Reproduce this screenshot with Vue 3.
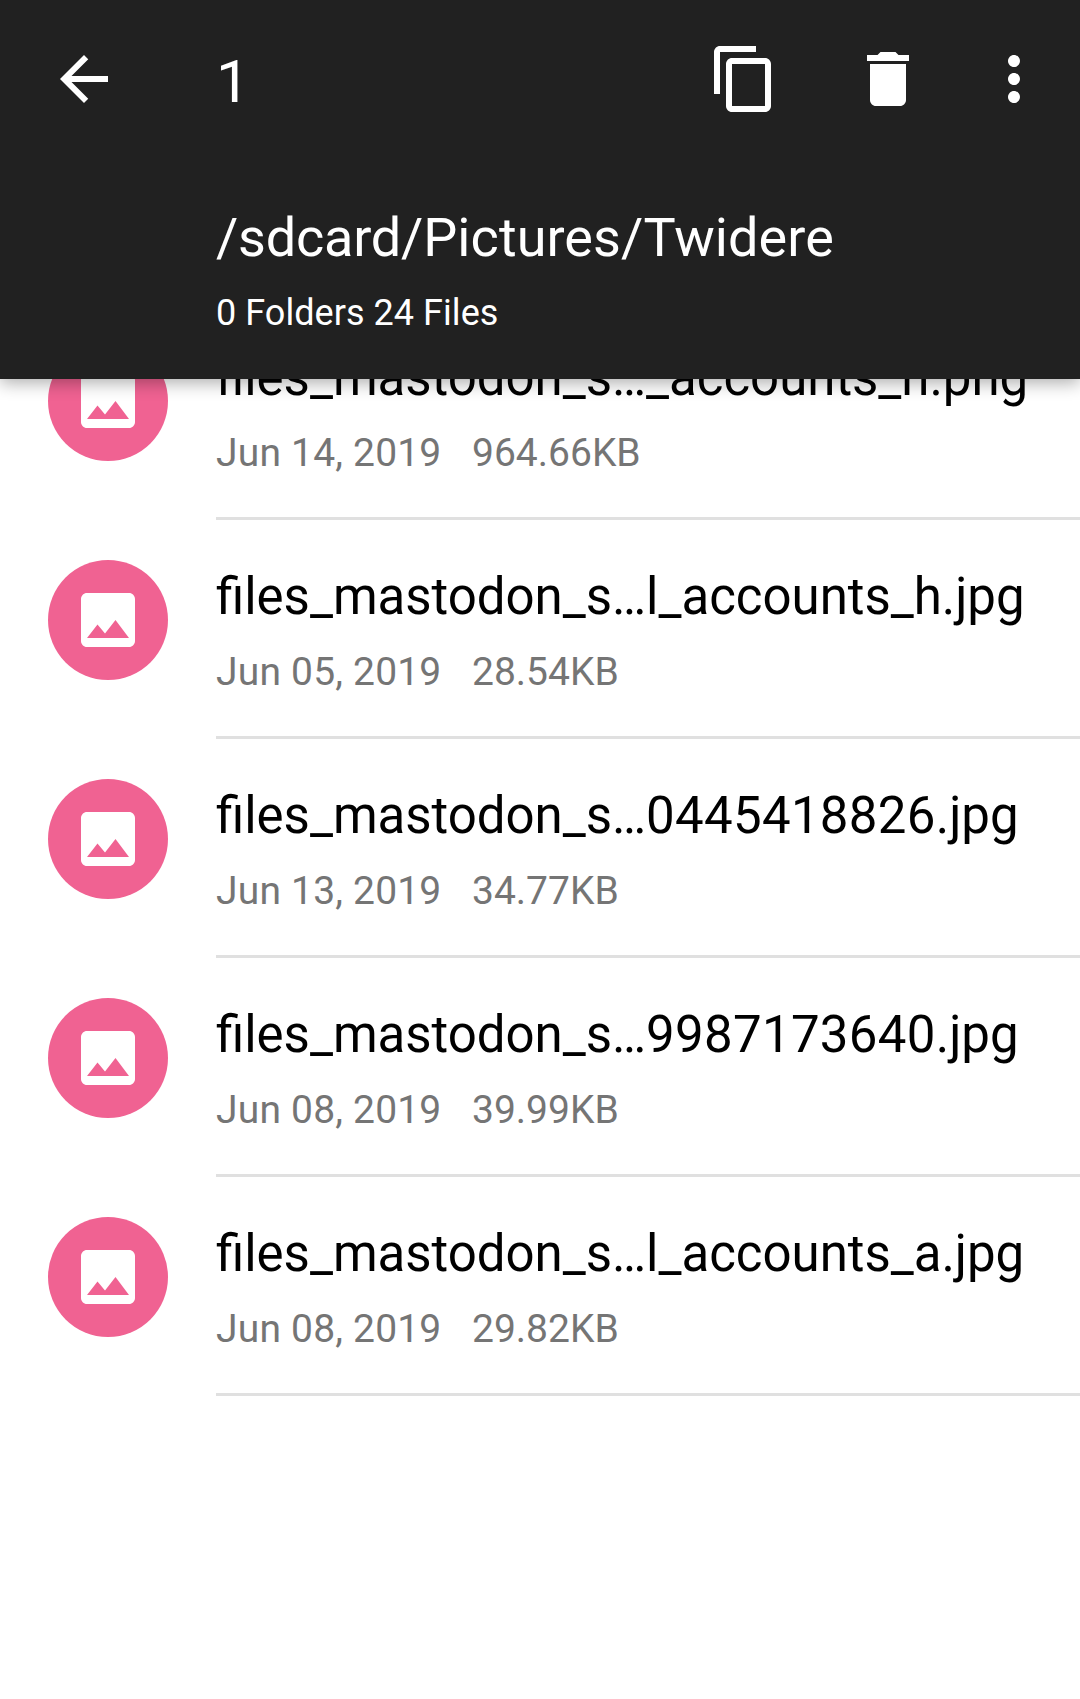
<script setup>
const files = [
  { stem: 'files_mastodon_s…', digits: '', tail: '_accounts_h.png', date: 'Jun 14, 2019', size: '964.66KB' },
  { stem: 'files_mastodon_s…', digits: '', tail: 'l_accounts_h.jpg', date: 'Jun 05, 2019', size: '28.54KB' },
  { stem: 'files_mastodon_s…', digits: '0445418826', tail: '.jpg', date: 'Jun 13, 2019', size: '34.77KB' },
  { stem: 'files_mastodon_s…', digits: '9987173640', tail: '.jpg', date: 'Jun 08, 2019', size: '39.99KB' },
  { stem: 'files_mastodon_s…', digits: '', tail: 'l_accounts_a.jpg', date: 'Jun 08, 2019', size: '29.82KB' },
]
</script>

<template>
  <div class="screen">
    <header class="header">
      <div class="toolbar">
        <svg class="back" viewBox="0 0 24 24"><path d="M20 11H7.83l5.59-5.59L12 4l-8 8 8 8 1.41-1.41L7.83 13H20v-2z" /></svg>
        <span class="count">1</span>
        <svg class="copy" viewBox="0 0 24 24"><path d="M16 1H4c-1.1 0-2 .9-2 2v14h2V3h12V1zm3 4H8c-1.1 0-2 .9-2 2v14c0 1.1.9 2 2 2h11c1.1 0 2-.9 2-2V7c0-1.1-.9-2-2-2zm0 16H8V7h11v14z" /></svg>
        <svg class="trash" viewBox="0 0 24 24"><path d="M6 19c0 1.1.9 2 2 2h8c1.1 0 2-.9 2-2V7H6v12zM19 4h-3.500l-1-1h-5l-1 1H5v2h14V4z" /></svg>
        <svg class="more" viewBox="0 0 24 24"><path d="M12 8c1.1 0 2-.9 2-2s-.9-2-2-2-2 .9-2 2 .9 2 2 2zm0 2c-1.1 0-2 .9-2 2s.9 2 2 2 2-.9 2-2-.9-2-2-2zm0 6c-1.1 0-2 .9-2 2s.9 2 2 2 2-.9 2-2-.9-2-2-2z" /></svg>
      </div>
      <div class="path"><span class="root">/sdcard/</span><span class="folder">Pictures/Twidere</span></div>
      <div class="summary">0 Folders 24 Files</div>
    </header>
    <main class="list">
      <div v-for="(file, i) in files" :key="i" class="row">
        <div class="avatar">
          <svg viewBox="0 0 24 24"><path d="M21 19V5c0-1.100-.9-2-2-2H5c-1.100 0-2 .9-2 2v14c0 1.100.9 2 2 2h14c1.100 0 2-.9 2-2zM8.500 13.500l2.500 3.010L14.500 12l4.500 6H5l3.500-4.500z" /></svg>
        </div>
        <div class="info">
          <div class="name">{{ file.stem }}<span v-if="file.digits" class="digits">{{ file.digits }}</span>{{ file.tail }}</div>
          <div class="meta"><span class="date">{{ file.date }}</span><span>{{ file.size }}</span></div>
        </div>
      </div>
    </main>
  </div>
</template>

<style>
body { margin: 0; background: #fff; }
</style>

<style scoped>
.screen { width: 1080px; height: 1699px; overflow: hidden; background: #fff; font-family: Roboto, sans-serif; display: flex; flex-direction: column; }
.header { position: relative; z-index: 1; height: 379px; flex: none; background: #212121; color: #fff; box-shadow: 0 4px 16px rgba(0,0,0,.32); }
svg { display: block; fill: currentColor; flex: none; }
.toolbar { height: 158px; display: flex; align-items: center; }
.toolbar svg { width: 72px; height: 72px; }
.back { margin-left: 48px; }
.count { font-size: 60px; line-height: 72px; width: 492px; margin-left: 96px; margin-top: 5px; }
.trash { margin-left: 72px; }
.more { margin-left: 54px; }
.path { margin: 48px 0 0 216px; font-size: 54px; line-height: 64px; white-space: nowrap; }
.root { letter-spacing: -.2px; }
.folder { letter-spacing: .08px; }
.summary { margin: 22px 0 0 216px; font-size: 36px; line-height: 42px; letter-spacing: .05px; }
.list { margin-top: -79px; }
.row { height: 219px; display: flex; }
.avatar { width: 120px; height: 120px; margin: 41px 48px 0; border-radius: 50%; background: #f06292; color: #fff; display: flex; align-items: center; justify-content: center; flex: none; }
.avatar svg { width: 72px; height: 72px; }
.info { flex: 1; height: 220px; box-sizing: border-box; padding-top: 48px; border-bottom: 3px solid #e0e0e0; white-space: nowrap; }
.name { font-size: 51px; line-height: 60px; color: #000; letter-spacing: -.03px; font-feature-settings: "liga" 1; }
.digits { letter-spacing: .3px; }
.meta { margin-top: 22px; font-size: 39px; line-height: 46px; color: #757575; display: flex; }
.date { width: 256px; letter-spacing: .2px; }
</style>
